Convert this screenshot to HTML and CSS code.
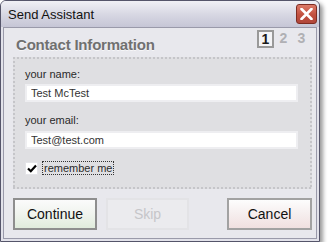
FILE: index.html
```html
<!DOCTYPE html>
<html lang="en">
<head>
  <meta charset="UTF-8" />
  <title>Send Assistant</title>
  <link rel="stylesheet" href="styles.css">
</head>
<body>
  <div class="window">
    <div class="titlebar">
      <span class="title">Send Assistant</span>
      <button class="close" title="Close">
        <svg width="13" height="12" viewBox="0 0 13 12"><path d="M1.5 1 L11.5 11 M11.5 1 L1.5 11" stroke="#fff" stroke-width="2.6" stroke-linecap="round"/></svg>
      </button>
    </div>

    <div class="frame">
      <div class="head">
        <h1>Contact Information</h1>
        <div class="steps">
          <span class="step current">1</span>
          <span class="step">2</span>
          <span class="step">3</span>
        </div>
      </div>

      <div class="panel">
        <div class="field">
          <label for="name">your name:</label>
          <input id="name" type="text" value="Test McTest">
        </div>
        <div class="field">
          <label for="email">your email:</label>
          <input id="email" type="text" value="Test@test.com">
        </div>
        <div class="remember">
          <span class="check">
            <svg width="10" height="9" viewBox="0 0 10 9"><path d="M1 4.5 L3.8 7.2 L9 1.5" fill="none" stroke="#000" stroke-width="2.2"/></svg>
          </span>
          <span class="remember-label">remember me</span>
        </div>
      </div>

      <div class="actions">
        <button class="btn continue">Continue</button>
        <button class="btn skip" disabled>Skip</button>
        <button class="btn cancel">Cancel</button>
      </div>
    </div>
  </div>
</body>
</html>
```

FILE: styles.css
```css
body { margin: 0; background: #fff; font-family: "Liberation Sans", Arial, sans-serif; }

.window { width: 318px; height: 240px; border: 1px solid #55556a; border-radius: 6px 6px 0 0; background: #e2e2ea; box-shadow: 3px 3px 4px rgba(0,0,0,0.4); }

.titlebar { height: 26px; display: flex; align-items: center; justify-content: space-between; padding-left: 7px; border-radius: 5px 5px 0 0; background: linear-gradient(#f0f0f5, #d6d6e2 55%, #c6c6d6); }
.title { font-size: 13px; color: #111; }
.close { width: 21px; height: 20px; margin-right: 2px; padding: 0; border: 1px solid #7e2c22; border-radius: 3px; background: linear-gradient(#dc7a68, #c2503f 55%, #b0463a); display: flex; align-items: center; justify-content: center; }

.frame { margin: 0 2px 2px; height: 210px; border: 1px solid #9a9aaa; background: #e8e8ed; }

.head { height: 29px; display: flex; justify-content: space-between; padding: 0 6px 0 12px; }
.head h1 { margin: 8px 0 0; font-size: 15px; line-height: 17px; font-weight: bold; color: #707070; text-shadow: 0 1px 0 #f6f6f8; letter-spacing: -0.2px; }
.steps { display: flex; gap: 1px; margin-top: 2px; }
.step { width: 17px; height: 18px; box-sizing: border-box; text-align: center; font-size: 14px; line-height: 16px; font-weight: bold; color: #b0b0b4; }
.step.current { border: 2px solid #999; background: #f4f4f6; color: #1a1a1a; line-height: 14px; }

.panel { height: 132px; box-sizing: border-box; margin: 0 4px 0 9px; padding: 10px 14px 0 12px; background-color: #dfdfe2;
  background-image:
    repeating-linear-gradient(90deg, #c5c5c9 0 2px, transparent 2px 4px),
    repeating-linear-gradient(90deg, #c5c5c9 0 2px, transparent 2px 4px),
    repeating-linear-gradient(180deg, #c5c5c9 0 2px, transparent 2px 4px),
    repeating-linear-gradient(180deg, #c5c5c9 0 2px, transparent 2px 4px);
  background-size: 100% 2px, 100% 2px, 2px 100%, 2px 100%;
  background-position: top left, bottom left, top left, top right;
  background-repeat: no-repeat; }

.field label { display: block; font-size: 11px; line-height: 14px; color: #2a2a2a; margin-bottom: 3px; }
.field + .field { margin-top: 11px; }
.field input { display: block; width: 100%; height: 18px; box-sizing: border-box; margin: 0; padding: 0 0 0 4px; border: 2px solid #eeeef1; background: #fff; font-family: inherit; font-size: 11px; color: #333; outline: none; }
.field + .field label { margin-bottom: 4px; }

.remember { display: flex; align-items: center; margin-top: 12px; height: 14px; }
.check { width: 11px; height: 11px; border: 1px solid #e4e4e8; background: #fff; display: flex; align-items: center; justify-content: center; }
.remember-label { margin-left: 4px; padding: 0 1px; border: 1px dotted #333; font-size: 11px; line-height: 12px; color: #2a2a2a; }

.actions { display: flex; margin: 9px 4px 0 9px; }
.btn { height: 32px; border: 2px solid #999; font-family: inherit; font-size: 14px; color: #111; padding: 0; }
.continue { width: 84px; background: linear-gradient(#fbfbfb, #f0f4ee 50%, #e0ecdc); border-color: #8e8e8e; }
.skip { width: 83px; margin-left: 9px; background: #ebebee; border-color: #e3e3e6; color: #c6c6c9; }
.cancel { width: 85px; margin-left: auto; background: linear-gradient(#fdfdfd, #f6eeee 50%, #f0e0e0); border-color: #a2a2a2; }
```
